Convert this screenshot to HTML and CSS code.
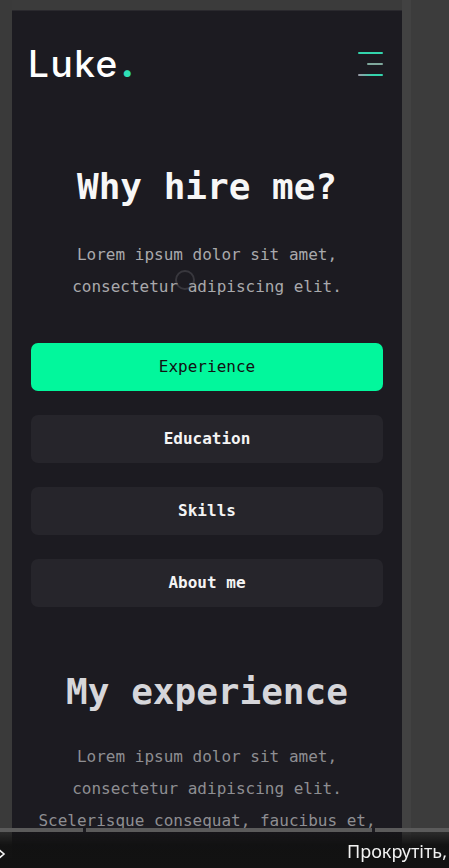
FILE: index.html
```html
<!DOCTYPE html>
<html lang="en">
<head>
<meta charset="utf-8">
<title>Luke — Why hire me?</title>
<link rel="stylesheet" href="styles.css">
</head>
<body>
<div class="screen">
  <div class="gutter"></div>
  <main class="panel">
    <header class="topbar">
      <div class="logo">Luke<span class="dot">.</span></div>
      <button class="menu" aria-label="Menu">
        <span class="bar bar-1"></span>
        <span class="bar bar-2"></span>
        <span class="bar bar-3"></span>
      </button>
    </header>
    <section class="hero">
      <h1 class="title">Why hire me?</h1>
      <p class="lead">Lorem ipsum dolor sit amet, consectetur adipiscing elit.</p>
      <nav class="tabs">
        <button class="tab tab-active">Experience</button>
        <button class="tab">Education</button>
        <button class="tab">Skills</button>
        <button class="tab">About me</button>
      </nav>
    </section>
    <section class="experience">
      <h2 class="title title-dim">My experience</h2>
      <p class="lead lead-dim">Lorem ipsum dolor sit amet, consectetur adipiscing elit. Scelerisque consequat, faucibus et,</p>
    </section>
  </main>
  <div class="side"></div>
</div>
<div class="spinner"></div>
<div class="bottombar">
  <div class="scrollline">
    <span class="seg seg-a"></span>
    <span class="seg seg-b"></span>
    <span class="seg seg-c"></span>
  </div>
  <div class="caption">
    <svg class="chev" width="8" height="14" viewBox="0 0 8 14"><polyline points="-3,1 4,7 -3,13" fill="none" stroke="#f2f2f2" stroke-width="1.6"/></svg>
    <span class="caption-text">Прокрутіть,</span>
  </div>
</div>
</body>
</html>
```

FILE: styles.css
```css
html, body {
  margin: 0;
  padding: 0;
}
body {
  width: 449px;
  height: 868px;
  overflow: hidden;
  background: #3b3b3b;
  font-family: "DejaVu Sans Mono", "Liberation Mono", monospace;
}
.screen {
  display: flex;
  height: 868px;
  overflow: hidden;
}
.gutter {
  width: 12px;
  flex: none;
  background: #3a3a3a;
}
.panel {
  width: 390px;
  flex: none;
  box-sizing: border-box;
  margin-top: 10px;
  padding: 0 19px;
  background: #1c1b21;
  border-top: 1px solid #2a292e;
  min-height: 900px;
}
.side {
  flex: 1;
  background: #3c3c3c;
  border-left: 9px solid #424242;
}
.topbar {
  display: flex;
  justify-content: space-between;
  align-items: center;
  padding-top: 34px;
}
.logo {
  font-family: "Inter", "Noto Sans", sans-serif;
  font-size: 37px;
  line-height: 37px;
  font-weight: 500;
  letter-spacing: 1.5px;
  color: #ffffff;
  margin-left: -3px;
}
.dot {
  color: #2fe0b6;
  font-weight: 800;
  margin-left: 2px;
}
.menu {
  display: flex;
  flex-direction: column;
  align-items: flex-end;
  gap: 9px;
  width: 25px;
  padding: 0;
  margin: 0;
  border: 0;
  background: none;
}
.bar {
  display: block;
  height: 2px;
  border-radius: 1px;
}
.bar-1 {
  width: 25px;
  background: #33d4ac;
}
.bar-2 {
  width: 16px;
  background: #7fa89c;
}
.bar-3 {
  width: 25px;
  background: linear-gradient(90deg, #9d9aa8, #33d4ac 60%);
}
.title {
  margin: 83px 0 0;
  font-size: 36px;
  line-height: 44px;
  font-weight: 700;
  text-align: center;
  color: #f7f7f7;
}
.lead {
  margin: 30px 0 0;
  font-size: 16px;
  line-height: 32px;
  text-align: center;
  color: #a9a9ac;
}
.tabs {
  display: flex;
  flex-direction: column;
  gap: 24px;
  margin-top: 40px;
}
.tab {
  height: 48px;
  border: 0;
  border-radius: 7px;
  background: #26252b;
  color: #f4f4f4;
  font-family: "DejaVu Sans Mono", "Liberation Mono", monospace;
  font-size: 16px;
  line-height: 48px;
  font-weight: 700;
  padding: 0;
}
.tab-active {
  background: #02f79c;
  color: #121212;
  font-weight: 400;
}
.experience .title {
  margin-top: 63px;
}
.title-dim {
  color: #d6d6da;
}
.lead-dim {
  margin-top: 27px;
  color: #8e8e92;
}
.spinner {
  position: fixed;
  left: 175px;
  top: 270px;
  width: 16px;
  height: 16px;
  border: 2px solid rgba(110, 110, 115, 0.35);
  border-radius: 50%;
}
.bottombar {
  position: fixed;
  left: 0;
  right: 0;
  bottom: 0;
  height: 40px;
  display: flex;
  flex-direction: column;
}
.scrollline {
  display: flex;
  height: 4px;
  flex: none;
}
.seg {
  display: block;
  height: 4px;
  background: #5b5b5b;
}
.seg-a {
  width: 83px;
}
.seg-b {
  width: 286px;
  margin-left: 3px;
}
.seg-c {
  flex: 1;
  margin-left: 3px;
}
.caption {
  flex: 1;
  display: flex;
  align-items: flex-end;
  background: linear-gradient(180deg, rgba(14, 14, 14, 0.35) 0, rgba(18, 18, 18, 0.97) 13px, #121212 100%);
  padding-bottom: 6px;
  box-sizing: border-box;
}
.chev {
  display: block;
  margin-bottom: 1px;
}
.caption-text {
  margin-left: 339px;
  font-family: "Noto Sans", "Liberation Sans", sans-serif;
  font-size: 18px;
  line-height: 22px;
  color: #f2f2f2;
  white-space: nowrap;
}
```
